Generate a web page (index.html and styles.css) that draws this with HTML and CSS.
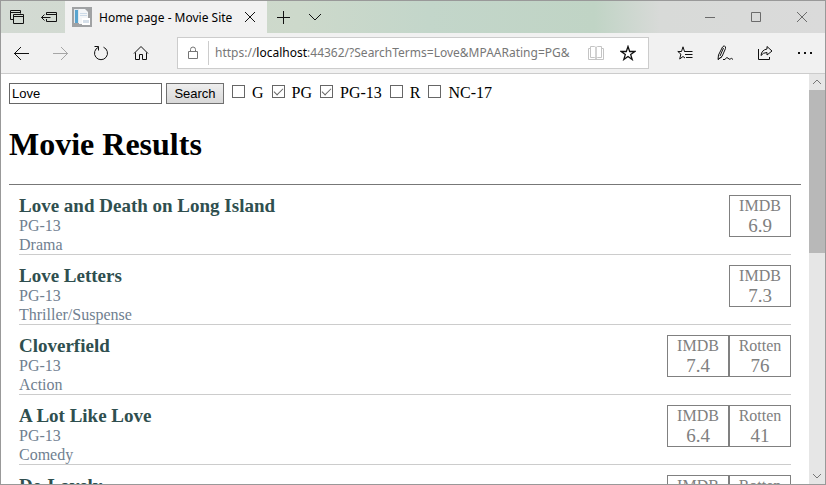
FILE: index.html
```html
<!DOCTYPE html>
<html lang="en">
<head>
<meta charset="utf-8">
<title>Home page - Movie Site</title>
<link rel="stylesheet" href="styles.css">
</head>
<body>
<div class="window">
  <header class="titlebar">
    <div class="tab-tools">
      <button class="icon-btn" aria-label="Tabs you've set aside"><svg width="16" height="16" viewBox="0 0 16 16"><path d="M4.500 10.500h-3v-9h10v3M1 3.500h11M4.500 5.500h10v9h-10zM4 7.500h11"/></svg></button>
      <button class="icon-btn" aria-label="Set these tabs aside"><svg width="16" height="16" viewBox="0 0 16 16"><path d="M5.500 6V3.500h10v9h-10V10M5 5.500h11M0.500 8.500h9M3.500 5.500l-3 3l3 3"/></svg></button>
    </div>
    <div class="tab">
      <svg class="favicon" width="20" height="20" viewBox="0 0 20 20"><path fill="#a0a2a4" d="M0 0h20v20H0z"/><path fill="#e4e9ee" d="M2 2h11v14H2z"/><path fill="#58a4cf" d="M3 3h3v13H3z"/><path fill="#f4f6f8" d="M7 2h6l3 3v12H7z"/><path fill="#cddbe8" d="M8 6h7v1H8zM8 8h7v1H8z"/><path fill="#fff" d="M10 11h8v7h-8z"/><path fill="#d5dfe9" d="M11 13h6v3h-6z"/></svg>
      <span class="tab-title">Home page - Movie Site</span>
      <button class="icon-btn small" aria-label="Close tab"><svg width="12" height="12" viewBox="0 0 12 12"><path d="M1 1l10 10M11 1L1 11"/></svg></button>
    </div>
    <div class="tab-actions">
      <button class="icon-btn" aria-label="New tab"><svg width="14" height="14" viewBox="0 0 14 14"><path d="M7.500 1v13M1 7.500h13"/></svg></button>
      <button class="icon-btn" aria-label="Show tab previews"><svg width="14" height="14" viewBox="0 0 14 14"><path d="M1 4l6 6l6-6"/></svg></button>
    </div>
    <div class="window-controls">
      <button class="icon-btn" aria-label="Minimize"><svg width="10" height="10" viewBox="0 0 10 10"><path d="M0 5.500h10"/></svg></button>
      <button class="icon-btn" aria-label="Maximize"><svg width="10" height="10" viewBox="0 0 10 10"><path d="M.5.500h9v9h-9z"/></svg></button>
      <button class="icon-btn" aria-label="Close"><svg width="10" height="10" viewBox="0 0 10 10"><path d="M0 0l10 10M10 0L0 10"/></svg></button>
    </div>
  </header>

  <nav class="toolbar">
    <div class="nav-buttons">
      <button class="icon-btn" aria-label="Back"><svg width="16" height="16" viewBox="0 0 16 16"><path d="M1 8.500h15M8 2l-6.500 6.500l6.500 6.500"/></svg></button>
      <button class="icon-btn faded" aria-label="Forward"><svg width="16" height="16" viewBox="0 0 16 16"><path d="M0 8.500h15M8 2l6.500 6.500l-6.500 6.500"/></svg></button>
      <button class="icon-btn" aria-label="Refresh"><svg width="16" height="16" viewBox="0 0 16 16"><path d="M1.500 1.500h4v4M5.500 2.200a6.500 6.500 0 1 0 5 0"/></svg></button>
      <button class="icon-btn" aria-label="Home"><svg width="16" height="16" viewBox="0 0 16 16"><path d="M1 8.500l7-7l7 7M2.500 7.500v7h4v-5h3v5h4v-7"/></svg></button>
    </div>
    <div class="address">
      <svg class="lock" width="12" height="14" viewBox="0 0 12 14"><path d="M1.500 5.500h9v7h-9zM3.500 5.500v-2a2.500 2.500 0 0 1 5 0v2"/></svg>
      <div class="url">https://<span class="host">localhost</span>:44362/?SearchTerms=Love&amp;MPAARating=PG&amp;</div>
      <button class="icon-btn pale" aria-label="Reading view"><svg width="16" height="16" viewBox="0 0 16 16"><path d="M2.500 1.500h4l1.500 1v11l-1.500-1h-4zM13.500 1.500h-4L8 2.500v11l1.500-1h4zM2 3.500H.5v11h15v-11H14"/></svg></button>
      <button class="icon-btn star" aria-label="Add to favorites"><svg width="16" height="16" viewBox="0 0 16 16"><path d="M8 1.500l1.700 5h5.100l-4.100 3.100l1.500 4.900L8 11.500l-4.200 3l1.500-4.900L1.200 6.500h5.100z"/></svg></button>
    </div>
    <div class="page-tools">
      <button class="icon-btn" aria-label="Favorites"><svg width="16" height="16" viewBox="0 0 16 16"><path d="M9 6.500H7.500L6 1.800L4.500 6.500H.800l3.100 2.600l-1.200 4.900L6 11.500l2 1.500M7.500 6.500h8M8 9.500h7.500M9 12.500h6.500"/></svg></button>
      <button class="icon-btn" aria-label="Add notes"><svg width="16" height="16" viewBox="0 0 16 16"><path d="M1 14.500l.5-4.500L5.500 2Q7.500 -.5 8.500 2v1.500L5 11.500zM6.500 3L3 11M1 14.500l4-3M6 14.500h2q1.500-3 3-1.500q1 2 2.200 1q1.300-1.500 2.800 .5"/></svg></button>
      <button class="icon-btn" aria-label="Share"><svg width="16" height="16" viewBox="0 0 16 16"><path d="M1.500 4v10.500h11V12M10 1.500l5 4.500l-5 4V7.500q-4 0-6 3q.5-5.500 6-6.500z"/></svg></button>
      <button class="icon-btn solid" aria-label="More"><svg width="16" height="16" viewBox="0 0 16 16"><path d="M1 7h2v2H1zM7 7h2v2H7zM13 7h2v2h-2z"/></svg></button>
    </div>
  </nav>

  <div class="viewport">
    <main class="page">
      <form class="search">
        <input class="terms" type="text" name="SearchTerms" value="Love" aria-label="Search terms">
        <button class="submit" type="submit">Search</button>
        <label class="rating"><input type="checkbox" name="MPAARating" value="G">G</label>
        <label class="rating"><input type="checkbox" name="MPAARating" value="PG" checked>PG</label>
        <label class="rating"><input type="checkbox" name="MPAARating" value="PG-13" checked>PG-13</label>
        <label class="rating"><input type="checkbox" name="MPAARating" value="R">R</label>
        <label class="rating"><input type="checkbox" name="MPAARating" value="NC-17">NC-17</label>
      </form>
      <h1>Movie Results</h1>
      <ul class="movie-list">
        <li>
          <div class="details"><h3>Love and Death on Long Island</h3><div>PG-13</div><div>Drama</div></div>
          <div class="score">IMDB<span>6.9</span></div>
        </li>
        <li>
          <div class="details"><h3>Love Letters</h3><div>PG-13</div><div>Thriller/Suspense</div></div>
          <div class="score">IMDB<span>7.3</span></div>
        </li>
        <li>
          <div class="details"><h3>Cloverfield</h3><div>PG-13</div><div>Action</div></div>
          <div class="score">IMDB<span>7.4</span></div>
          <div class="score">Rotten<span>76</span></div>
        </li>
        <li>
          <div class="details"><h3>A Lot Like Love</h3><div>PG-13</div><div>Comedy</div></div>
          <div class="score">IMDB<span>6.4</span></div>
          <div class="score">Rotten<span>41</span></div>
        </li>
        <li>
          <div class="details"><h3>De-Lovely</h3></div>
          <div class="score">IMDB</div>
          <div class="score">Rotten</div>
        </li>
      </ul>
    </main>
    <div class="scrollbar" aria-hidden="true">
      <svg width="16" height="16" viewBox="0 0 16 16"><path d="M4 10l4-4l4 4"/></svg>
      <div class="track"><div class="thumb"></div></div>
      <svg width="16" height="16" viewBox="0 0 16 16"><path d="M4 6l4 4l4-4"/></svg>
    </div>
  </div>
</div>
</body>
</html>
```
FILE: styles.css
```css
* {
  box-sizing: border-box;
}

body {
  margin: 0;
  font-family: "Liberation Serif", serif;
  font-size: 16px;
  color: #000;
}

.window {
  display: flex;
  flex-direction: column;
  height: 100vh;
  border: 1px solid #999;
  background: #fff;
  overflow: hidden;
}

.icon-btn {
  display: flex;
  align-items: center;
  justify-content: center;
  flex: none;
  width: 40px;
  height: 32px;
  padding: 0;
  border: 0;
  background: none;
  color: #111;
}

svg {
  display: block;
  flex: none;
}

.icon-btn path,
.lock path,
.scrollbar path {
  fill: none;
  stroke: currentColor;
}

.icon-btn.solid path {
  fill: currentColor;
  stroke: none;
}

.icon-btn.faded {
  color: #a6a6a6;
}

.icon-btn.pale {
  width: 24px;
  color: #c4c4c4;
}

.icon-btn.star path {
  stroke-width: 1.3;
}

.titlebar {
  display: flex;
  flex: none;
  height: 32px;
  background: linear-gradient(90deg, #d3dad3 0%, #cdd9cb 36%, #c3d6ca 52%, #c0d4c5 72%, #d8dad8 80%, #dadada 100%);
}

.tab-tools,
.tab-actions,
.window-controls {
  display: flex;
}

.tab-tools .icon-btn {
  width: 32px;
}

.tab {
  display: flex;
  align-items: center;
  width: 202px;
  padding: 0 1px 0 7px;
  background: #f1f1f1;
  font-family: "Noto Sans", sans-serif;
  font-size: 12px;
}

.tab-title {
  flex: 1;
  margin-left: 7px;
  overflow: hidden;
  white-space: nowrap;
}

.icon-btn.small {
  width: 32px;
}

.tab-actions .icon-btn {
  width: 32px;
}

.window-controls {
  margin-left: auto;
}

.window-controls .icon-btn {
  width: 46px;
  color: #6b6b6b;
}

.toolbar {
  display: flex;
  align-items: center;
  flex: none;
  height: 41px;
  background: #f1f1f1;
  border-bottom: 1px solid #ccc;
}

.nav-buttons,
.page-tools {
  display: flex;
}

.address {
  display: flex;
  align-items: center;
  flex: 1;
  min-width: 0;
  height: 32px;
  margin: 0 16px;
  border: 1px solid #ccc;
  background: #fff;
}

.lock {
  margin: 0 9px;
  color: #767676;
}

.url {
  flex: 1;
  height: 24px;
  padding-left: 6px;
  border-left: 1px solid #ccc;
  overflow: hidden;
  white-space: nowrap;
  font: 12px/24px "Noto Sans", sans-serif;
  color: #777;
}

.host {
  color: #000;
}

.viewport {
  display: flex;
  flex: 1;
  min-height: 0;
}

.page {
  flex: 1;
  padding: 8px;
  overflow: hidden;
}

.search {
  display: flex;
  align-items: center;
  height: 22px;
}

.terms {
  width: 153px;
  height: 21px;
  margin: 0 4px 0 0;
  padding: 0 2px;
  border: 1px solid #666;
  font: 13px "Liberation Sans", sans-serif;
}

.submit {
  height: 21px;
  width: 58px;
  padding: 0;
  border: 1px solid #707070;
  background: linear-gradient(#eee, #d8d8d8);
  font: 13px "Liberation Sans", sans-serif;
}

.rating {
  display: flex;
  align-items: center;
  margin-left: 8px;
}

.rating input {
  appearance: none;
  width: 13px;
  height: 13px;
  margin: 0 7px 3px 0;
  border: 1px solid #666;
  background: #fff;
}

.rating input:checked::before {
  content: "";
  display: block;
  width: 8px;
  height: 4px;
  margin: 2px 1px;
  border: solid #666;
  border-width: 0 0 1px 1px;
  transform: rotate(-45deg);
}

h1 {
  margin: 22px 0 21px;
  font-size: 32px;
  line-height: 37px;
}

.movie-list {
  margin: 0;
  padding: 0 10px;
  border-top: 1px solid #777;
  list-style: none;
}

.movie-list li {
  display: flex;
  align-items: flex-start;
  padding-top: 10px;
  border-bottom: 1px solid #ccc;
}

.details {
  flex: 1;
  line-height: 19px;
  color: slategray;
}

.details h3 {
  margin: 0;
  font-size: 19px;
  line-height: 21px;
  color: darkslategray;
}

.score {
  width: 62px;
  border: 1px solid gray;
  line-height: 19px;
  text-align: center;
  color: gray;
}

.score span {
  display: block;
  font-size: 19px;
  line-height: 21px;
}

.scrollbar {
  display: flex;
  flex-direction: column;
  width: 16px;
  background: #e6e6e6;
  color: #777;
}

.track {
  flex: 1;
}

.thumb {
  height: 43%;
  background: #b8b8b8;
}
```
